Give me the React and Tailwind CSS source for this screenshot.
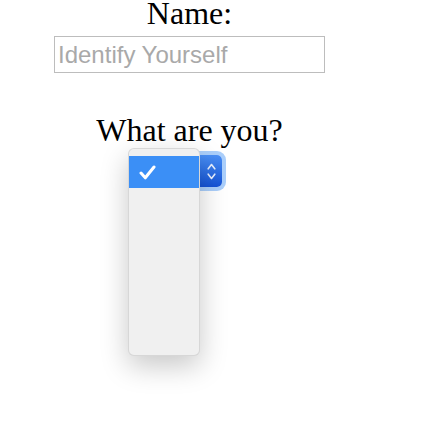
import React from 'react';

const serif = { fontFamily: '"Liberation Serif", "Times New Roman", serif' };

const App = () => {
  return (
    <div className="w-[442px] h-[444px] bg-white relative overflow-hidden">
      <form className="w-[379px] flex flex-col items-center">
        {/* Name */}
        <div className="h-[36px] text-[32px] leading-[26px] text-black" style={serif}>Name:</div>
        <input
          type="text"
          placeholder="Identify Yourself"
          className="w-[271px] h-[37px] border border-[#bdbdbd] pl-[3px] text-[24px] placeholder:text-[#a9a9a9] outline-none"
          style={{ fontFamily: '"Liberation Sans", Arial, sans-serif' }}
        />

        {/* Kind */}
        <div className="mt-[44px] h-[38px] text-[32px] leading-[26px] text-black" style={serif}>What are you?</div>
        <div className="w-full pl-[128px] flex">
          <div className="relative w-[94px] h-[32px]">
            {/* closed select button (right part) with focus ring */}
            <div className="absolute left-[72px] top-0 w-[22px] h-[32px] rounded-r-[5px] bg-gradient-to-b from-[#4a8ff5] to-[#1552d6] ring-4 ring-[#abcffb] flex flex-col items-center justify-center gap-[3px]">
              <svg width="9" height="7" viewBox="0 0 9 7" fill="none">
                <path d="M1.2 5.8 L4.5 1.5 L7.8 5.8" stroke="#e8f0ff" strokeWidth="1.6" strokeLinecap="round" strokeLinejoin="round" />
              </svg>
              <svg width="9" height="7" viewBox="0 0 9 7" fill="none">
                <path d="M1.2 1.2 L4.5 5.5 L7.8 1.2" stroke="#e8f0ff" strokeWidth="1.6" strokeLinecap="round" strokeLinejoin="round" />
              </svg>
            </div>

            {/* open popup menu */}
            <div className="absolute left-0 top-[-7px] w-[72px] h-[208px] rounded-[6px] bg-[#f0f0f0] border border-black/10 shadow-[0_10px_28px_rgba(0,0,0,0.22)] pt-[7px]">
              <div className="h-[32px] bg-[#3b8ff6] flex items-center pl-[10px]">
                <svg width="17" height="15" viewBox="0 0 17 15" fill="none">
                  <path d="M2 8 L6.3 12.8 L15 2" stroke="white" strokeWidth="3" strokeLinecap="round" strokeLinejoin="round" />
                </svg>
              </div>
            </div>
          </div>
        </div>
      </form>
    </div>
  );
};

export default App;
